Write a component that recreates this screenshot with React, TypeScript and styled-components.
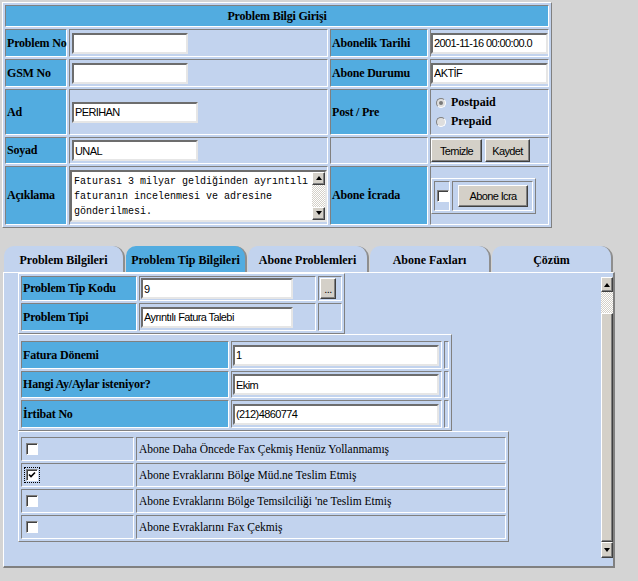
import React from "react";
import styled, { createGlobalStyle, css } from "styled-components";

const BLUE = "#52ace0";
const LIGHT = "#c2d3ee";
const PAGE = "#d4d4d4";
const FACE = "#d4d0c8";
const SERIF = `"Liberation Serif", "Times New Roman", serif`;
const SANS = `"Liberation Sans", Arial, sans-serif`;
const MONO = `"Liberation Mono", "Courier New", monospace`;

const GlobalStyle = createGlobalStyle`
  html, body {
    margin: 0;
    background: ${PAGE};
  }
  body {
    font-family: ${SERIF};
    font-size: 12px;
    color: #000;
  }
`;

const Page = styled.div`
  padding: 2px 0 0 2px;
  display: flex;
  flex-direction: column;
  align-items: flex-start;
`;

// old-style bordered table: outset frame, inset cells, 2px cellspacing
const FormTable = styled.table<{ $w: number; $padTop?: number }>`
  width: ${p => p.$w}px;
  border-collapse: separate;
  border-spacing: 2px;
  border: 1px solid;
  border-color: #fff #808080 #808080 #fff;
  background: ${LIGHT};
  padding-top: ${p => p.$padTop ?? 0}px;
  table-layout: fixed;
`;

const Col = styled.col<{ $w: number }>`
  width: ${p => p.$w}px;
`;

const Cell = styled.td<{ $h?: number; $label?: boolean; $center?: boolean; $pad?: number }>`
  box-sizing: border-box;
  border: 1px solid;
  border-color: #808080 #fff #fff #808080;
  padding: 0 ${p => p.$pad ?? 1}px;
  background: ${p => (p.$label ? BLUE : LIGHT)};
  font-weight: ${p => (p.$label ? 700 : 400)};
  font-size: 12px;
  letter-spacing: ${p => (p.$label ? "-0.2px" : "0")};
  text-align: ${p => (p.$center ? "center" : "left")};
  vertical-align: middle;
  white-space: nowrap;
  overflow: visible;
  ${p => p.$h && css`height: ${p.$h}px;`}
`;

const Input = styled.input<{ $w: number }>`
  box-sizing: border-box;
  display: block;
  width: ${p => p.$w}px;
  height: 21px;
  margin: 0;
  padding: 1px 1px;
  border: 2px solid;
  border-color: #6d6d6d #e6e6e6 #e6e6e6 #6d6d6d;
  background: #fff;
  font-family: ${SANS};
  font-size: 11px;
  letter-spacing: -0.6px;
  color: #000;
  outline: none;
`;

const Button = styled.button<{ $w: number; $h?: number }>`
  box-sizing: border-box;
  width: ${p => p.$w}px;
  height: ${p => p.$h ?? 23}px;
  margin: 0;
  padding: 0;
  background: ${FACE};
  border: 1px solid;
  border-color: #fff #404040 #404040 #fff;
  box-shadow: inset -1px -1px #808080;
  font-family: ${SANS};
  font-size: 11px;
  letter-spacing: -0.6px;
  color: #000;
`;

const ButtonRow = styled.div`
  display: flex;
  gap: 3px;
`;

const RadioList = styled.div`
  display: flex;
  flex-direction: column;
  gap: 4px;
  padding-left: 4px;
`;

const RadioLine = styled.label`
  display: flex;
  align-items: center;
  gap: 5px;
  font-weight: 700;
`;

const Radio = styled.span<{ $on?: boolean }>`
  position: relative;
  box-sizing: border-box;
  width: 10px;
  height: 10px;
  border-radius: 50%;
  border: 1px solid;
  border-color: #808080 #fff #fff #808080;
  background: #dedede;
  ${p =>
    p.$on &&
    css`
      &::after {
        content: "";
        position: absolute;
        left: 2px;
        top: 2px;
        width: 4px;
        height: 4px;
        border-radius: 50%;
        background: #7a7a7a;
      }
    `}
`;

const Check = styled.span<{ $focus?: boolean }>`
  position: relative;
  display: block;
  box-sizing: border-box;
  width: 12px;
  height: 12px;
  border: 1px solid;
  border-color: #808080 #fff #fff #808080;
  box-shadow: inset 1px 1px #404040;
  background: #fff;
  ${p =>
    p.$focus &&
    css`
      outline: 1px dotted #000;
      outline-offset: 1px;
    `}
`;

const CheckMark = styled.svg`
  position: absolute;
  left: 1px;
  top: 1px;
`;

const TextBox = styled.div`
  box-sizing: border-box;
  display: flex;
  width: 257px;
  height: 52px;
  border: 2px solid;
  border-color: #6d6d6d #e6e6e6 #e6e6e6 #6d6d6d;
  background: #fff;
`;

const TextBody = styled.div`
  flex: 1;
  padding: 2px 2px 0;
  font-family: ${MONO};
  font-size: 10px;
  line-height: 15px;
  white-space: pre;
  overflow: hidden;
`;

const ScrollCol = styled.div<{ $w: number; $m?: string }>`
  flex: none;
  display: flex;
  flex-direction: column;
  width: ${p => p.$w}px;
  margin: ${p => p.$m ?? "0"};
`;

const Arrow = styled.div<{ $h: number; $down?: boolean }>`
  flex: none;
  box-sizing: border-box;
  height: ${p => p.$h}px;
  display: flex;
  align-items: center;
  justify-content: center;
  background: ${FACE};
  border: 1px solid;
  border-color: #fff #404040 #404040 #fff;
  box-shadow: inset -1px -1px #808080;
  &::before {
    content: "";
    border-left: 3px solid transparent;
    border-right: 3px solid transparent;
    ${p =>
      p.$down
        ? css`border-top: 4px solid #000;`
        : css`border-bottom: 4px solid #000;`}
  }
`;

const Dither = styled.div<{ $h?: number }>`
  ${p => (p.$h ? css`height: ${p.$h}px; flex: none;` : css`flex: 1;`)}
  background: repeating-conic-gradient(#fff 0 25%, ${FACE} 0 50%) 0 0 / 2px 2px;
`;

const Thumb = styled.div`
  flex: 1;
  box-sizing: border-box;
  background: ${FACE};
  border: 1px solid;
  border-color: #fff #404040 #404040 #fff;
  box-shadow: inset -1px -1px #808080;
`;

const TabStrip = styled.div`
  display: flex;
  gap: 1px;
  margin: 18px 0 0 2px;
`;

const Tab = styled.div<{ $active?: boolean }>`
  box-sizing: border-box;
  width: 121px;
  height: 26px;
  display: flex;
  align-items: center;
  justify-content: center;
  padding-top: 2px;
  background: ${p => (p.$active ? BLUE : LIGHT)};
  border-right: 2px solid #8e8e8e;
  border-radius: 10px 12px 0 0;
  font-weight: 700;
`;

const Panel = styled.div`
  box-sizing: border-box;
  display: flex;
  width: 612px;
  height: 296px;
  margin-left: 1px;
  background: ${LIGHT};
  border-top: 1px solid #fff;
  border-left: 1px solid #fff;
  border-right: 2px solid #808080;
  border-bottom: 2px solid #808080;
`;

const PanelBody = styled.div`
  flex: 1;
  display: flex;
  flex-direction: column;
  align-items: flex-start;
  padding-left: 14px;
  overflow: hidden;
`;

const FaxText = styled.span`
  font-size: 11.5px;
  padding-left: 1px;
`;

const faxItems = [
  { text: "Abone Daha Öncede Fax Çekmiş Henüz Yollanmamış", on: false },
  { text: "Abone Evraklarını Bölge Müd.ne Teslim Etmiş", on: true },
  { text: "Abone Evraklarını Bölge Temsilciliği 'ne Teslim Etmiş", on: false },
  { text: "Abone Evraklarını Fax Çekmiş", on: false },
];

const tabs = ["Problem Bilgileri", "Problem Tip Bilgileri", "Abone Problemleri", "Abone Faxları", "Çözüm"];

export default function App() {
  return (
    <>
      <GlobalStyle />
      <Page>
        <FormTable $w={550}>
          <colgroup>
            <Col $w={62} />
            <Col $w={259} />
            <Col $w={98} />
            <Col $w={119} />
          </colgroup>
          <tbody>
            <tr>
              <Cell colSpan={4} $label $center $h={22}>Problem Bilgi Girişi</Cell>
            </tr>
            <tr>
              <Cell $label $h={28}>Problem No</Cell>
              <Cell $pad={2}><Input $w={116} readOnly value="" /></Cell>
              <Cell $label>Abonelik Tarihi</Cell>
              <Cell $pad={0}><Input $w={117} readOnly value="2001-11-16 00:00:00.0" /></Cell>
            </tr>
            <tr>
              <Cell $label $h={28}>GSM No</Cell>
              <Cell $pad={2}><Input $w={116} readOnly value="" /></Cell>
              <Cell $label>Abone Durumu</Cell>
              <Cell $pad={0}><Input $w={117} readOnly value="AKTİF" /></Cell>
            </tr>
            <tr>
              <Cell $label $h={46}>Ad</Cell>
              <Cell $pad={2}><Input $w={126} readOnly value="PERIHAN" /></Cell>
              <Cell $label>Post / Pre</Cell>
              <Cell>
                <RadioList>
                  <RadioLine><Radio $on />Postpaid</RadioLine>
                  <RadioLine><Radio />Prepaid</RadioLine>
                </RadioList>
              </Cell>
            </tr>
            <tr>
              <Cell $label $h={27}>Soyad</Cell>
              <Cell $pad={2}><Input $w={126} readOnly value="UNAL" /></Cell>
              <Cell />
              <Cell $pad={0}>
                <ButtonRow>
                  <Button $w={51}>Temizle</Button>
                  <Button $w={45}>Kaydet</Button>
                </ButtonRow>
              </Cell>
            </tr>
            <tr>
              <Cell $label $h={59}>Açıklama</Cell>
              <Cell $pad={0}>
                <TextBox>
                  <TextBody>{"Faturası 3 milyar geldiğinden ayrıntılı\nfaturanın incelenmesi ve adresine\ngönderilmesi."}</TextBody>
                  <ScrollCol $w={13}>
                    <Arrow $h={13} />
                    <Dither />
                    <Arrow $h={13} $down />
                  </ScrollCol>
                </TextBox>
              </Cell>
              <Cell $label>Abone İcrada</Cell>
              <Cell $pad={0}>
                <FormTable $w={105}>
                  <colgroup>
                    <Col $w={16} />
                    <Col $w={81} />
                  </colgroup>
                  <tbody>
                    <tr>
                      <Cell $h={30} $pad={2}><Check /></Cell>
                      <Cell $pad={5}><Button $w={70} $h={22}>Abone Icra</Button></Cell>
                    </tr>
                  </tbody>
                </FormTable>
              </Cell>
            </tr>
          </tbody>
        </FormTable>

        <TabStrip>
          {tabs.map((t, i) => (
            <Tab key={t} $active={i === 1}>{t}</Tab>
          ))}
        </TabStrip>
        <Panel>
          <PanelBody>
            <FormTable $w={327}>
              <colgroup>
                <Col $w={116} />
                <Col $w={177} />
                <Col $w={24} />
              </colgroup>
              <tbody>
                <tr>
                  <Cell $label $h={25}>Problem Tip Kodu</Cell>
                  <Cell $pad={1}><Input $w={152} readOnly value="9" /></Cell>
                  <Cell $pad={1}><Button $w={16} $h={21}>...</Button></Cell>
                </tr>
                <tr>
                  <Cell $label $h={28}>Problem Tipi</Cell>
                  <Cell $pad={1}><Input $w={152} readOnly value="Ayrıntılı Fatura Talebi" /></Cell>
                  <Cell />
                </tr>
              </tbody>
            </FormTable>
            <FormTable $w={434} $padTop={4}>
              <colgroup>
                <Col $w={208} />
                <Col $w={211} />
                <Col $w={5} />
              </colgroup>
              <tbody>
                <tr>
                  <Cell $label $h={28}>Fatura Dönemi</Cell>
                  <Cell $pad={1}><Input $w={206} readOnly value="1" /></Cell>
                  <Cell $pad={0} />
                </tr>
                <tr>
                  <Cell $label $h={27}>Hangi Ay/Aylar isteniyor?</Cell>
                  <Cell $pad={1}><Input $w={206} readOnly value="Ekim" /></Cell>
                  <Cell $pad={0} />
                </tr>
                <tr>
                  <Cell $label $h={28}>İrtibat No</Cell>
                  <Cell $pad={1}><Input $w={206} readOnly value="(212)4860774" /></Cell>
                  <Cell $pad={0} />
                </tr>
              </tbody>
            </FormTable>
            <FormTable $w={491} $padTop={3}>
              <colgroup>
                <Col $w={113} />
                <Col $w={370} />
              </colgroup>
              <tbody>
                {faxItems.map((f, i) => (
                  <tr key={f.text}>
                    <Cell $h={24} $pad={4}>
                      <Check $focus={i === 1}>
                        {f.on && (
                          <CheckMark width="8" height="8" viewBox="0 0 8 8">
                            <path d="M1 3.5 L3 5.5 L7 1.5" stroke="#000" strokeWidth="1.6" fill="none" />
                          </CheckMark>
                        )}
                      </Check>
                    </Cell>
                    <Cell $pad={1}><FaxText>{f.text}</FaxText></Cell>
                  </tr>
                ))}
              </tbody>
            </FormTable>
          </PanelBody>
          <ScrollCol $w={12} $m="4px 0 8px 0">
            <Arrow $h={15} />
            <Dither $h={21} />
            <Thumb />
            <Arrow $h={16} $down />
          </ScrollCol>
        </Panel>
      </Page>
    </>
  );
}
